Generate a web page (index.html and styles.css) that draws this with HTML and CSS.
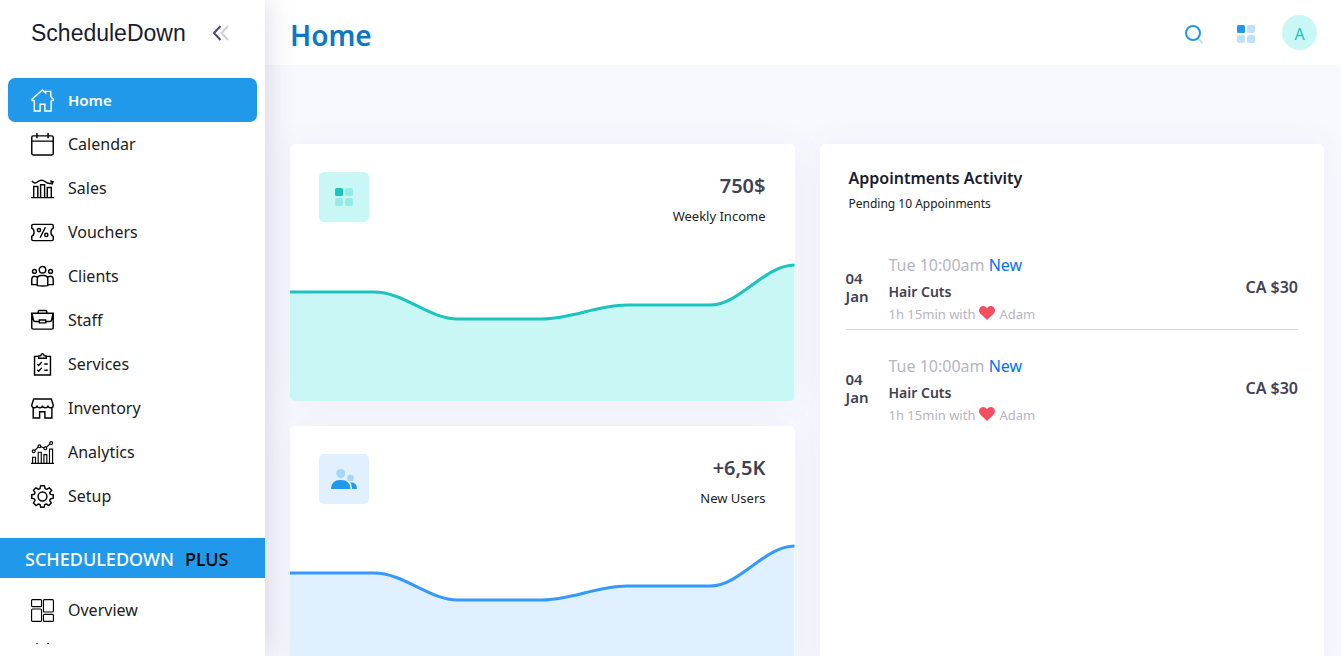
FILE: index.html
```html
<!DOCTYPE html>
<html lang="en">
<head>
<meta charset="utf-8">
<title>ScheduleDown</title>
<link rel="stylesheet" href="styles.css">
</head>
<body>
<div class="app">
  <aside class="sidebar">
    <div class="brand">
      <a class="brand-name" href="#">ScheduleDown</a>
      <button class="collapse" type="button" aria-label="Collapse menu">
        <svg width="18" height="18" viewBox="0 0 18 18" fill="none" stroke-width="2"><path d="M8.500 2 2 9l6.500 7" stroke="#494b7c"/><path d="M16 2 9.500 9l6.500 7" stroke="#cfcfde"/></svg>
      </button>
    </div>
    <nav class="menu">
      <ul class="menu-list">
        <li><a class="menu-item active" href="#"><svg class="icon" viewBox="0 0 24 24"><path d="M3.500 12v11h6v-7h5v7h6.500V12M3.500 12H1.200v-1.500L12 1l3.300 3V2.500h5.300V8l2.700 2.500V12H21"/></svg>Home</a></li>
        <li><a class="menu-item" href="#"><svg class="icon" viewBox="0 0 24 24"><rect x=".8" y="3" width="22.400" height="20" rx="1.500"/><path d="M1 8.500h22M6.200 0v5.500M17.800 0v5.500"/></svg>Calendar</a></li>
        <li><a class="menu-item" href="#"><svg class="icon" viewBox="0 0 24 24"><path d="M0 21.500h24M2.800 21V10h4.300v11M10 21V8h4.200v13M17 21V11h4.200v10M1 4.200c2 2.500 4 2.800 6 .8 3-2.600 5-2.600 8 0 2 1.800 4 2.500 7.500 1M20 4l3 1-1.500 3"/></svg>Sales</a></li>
        <li><a class="menu-item" href="#"><svg class="icon" viewBox="0 0 24 24"><path d="M2.200 3.500h19.600Q23.200 3.500 23.200 5v2.500C20 9 20 14.500 23.200 16v3q0 1.500-1.400 1.500H2.200Q.8 20.500.8 19v-3C4 14.500 4 9 .8 7.500V5q0-1.500 1.400-1.500ZM15 6.500 9.500 17.500"/><circle cx="8.300" cy="9.500" r="1.700"/><circle cx="16" cy="14.500" r="1.700"/></svg>Vouchers</a></li>
        <li><a class="menu-item" href="#"><svg class="icon" viewBox="0 0 24 24"><circle cx="12" cy="5" r="3.400"/><circle cx="3.600" cy="6.700" r="2"/><circle cx="20.400" cy="6.700" r="2"/><path d="M6.500 21.500V15q0-4 4-4h3q4 0 4 4v6.500q-5.500 1-11 0ZM6.500 20.500H.8v-5q0-3.700 3-3.700 2 0 3 1.500M17.500 20.500h5.700v-5q0-3.700-3-3.700-2 0-3 1.500"/></svg>Clients</a></li>
        <li><a class="menu-item" href="#"><svg class="icon" viewBox="0 0 24 24"><path d="M.8 4.500h22.400v15q0 1.500-1.500 1.500H2.300Q.8 21 .8 19.500ZM7.500 4V2.800q0-1.200 1.200-1.200h6.600q1.200 0 1.200 1.200V4M1 4.500l1.500 7q.3 1.500 2 1.500h4.200M23 4.500l-1.500 7q-.3 1.500-2 1.500h-4.200M8.700 11.500h6.600v3H8.700Z"/></svg>Staff</a></li>
        <li><a class="menu-item" href="#"><svg class="icon" viewBox="0 0 24 24"><path d="M8 3.500H3.700V23h16.600V3.500H16M8 5.500V3h2.200Q10.500.8 12 .8T13.800 3H16v2.500ZM6.500 11.500l1.500 1.500 3.300-3.500M6.500 17.500 8 19l3.300-3.500M13.800 11.500H17.500M13.800 18h3.700"/></svg>Services</a></li>
        <li><a class="menu-item" href="#"><svg class="icon" viewBox="0 0 24 24"><path d="M2.800 2h18.400l2 6.500q0 2.700-2.700 2.700t-2.800-2.400q0 2.400-2.900 2.400T12 8.800q0 2.400-2.800 2.400T6.300 8.800q0 2.400-2.800 2.400T.8 8.500ZM2.300 11.500V22H9v-6.700h5.500V22h7.300V11.500"/></svg>Inventory</a></li>
        <li><a class="menu-item" href="#"><svg class="icon thin" viewBox="0 0 24 24"><path d="M0 23.300h24M1.700 23v-6h3v6M7.500 23V11.700h3.200V23M13.500 23v-8.800h3V23M19.300 23V8.500h3.200V23M4 9.800l3.500-3.500M10 5.800l3.500 1.500M16 6.600l4-3.700"/><circle cx="2.800" cy="10.800" r="1.500"/><circle cx="8.800" cy="5.500" r="1.500"/><circle cx="14.900" cy="7.600" r="1.500"/><circle cx="21" cy="2.200" r="1.500"/></svg>Analytics</a></li>
        <li><a class="menu-item" href="#"><svg class="icon" viewBox="0 0 24 24"><circle cx="12" cy="12" r="4.600"/><path d="M10 .8h4l.7 2.900 1.800.8L19 2.900 21.600 5.500 19.500 8l.8 1.800 2.900.4v3.700l-2.900.6-.8 1.700 1.700 2.600-2.600 2.700-2.600-1.700-1.700.7-.6 2.700h-3.600l-.6-2.700-1.800-.7-2.500 1.700-2.700-2.700 1.700-2.600-.7-1.700-2.700-.6v-3.700l2.700-.6.7-1.800-1.700-2.400L5.200 2.900l2.500 1.600 1.700-.8Z" stroke-linejoin="round"/></svg>Setup</a></li>
      </ul>
      <h2 class="menu-heading">SCHEDULEDOWN <span class="plus">PLUS</span></h2>
      <ul class="menu-list">
        <li><a class="menu-item" href="#"><svg class="icon thin" viewBox="0 0 24 24"><rect x=".6" y=".6" width="10.400" height="7.400" rx="1"/><rect x=".6" y="10.400" width="10.400" height="13" rx="1"/><rect x="13" y=".6" width="10.400" height="13" rx="1"/><rect x="13" y="16" width="10.400" height="7.400" rx="1"/></svg>Overview</a></li>
        <li class="menu-item"><svg class="icon" viewBox="0 0 24 24"><rect x=".8" y="3" width="22.400" height="20" rx="1.500"/><path d="M1 8.500h22M6.200 0v5.500M17.800 0v5.500"/></svg></li>
      </ul>
    </nav>
  </aside>

  <div class="page">
    <header class="topbar">
      <h1 class="title">Home</h1>
      <div class="tools">
        <button class="tool" type="button" aria-label="Search"><svg width="20" height="20" viewBox="0 0 20 20" fill="none"><path d="m14 14.500 4.500 4.500" stroke="#bfe1fa" stroke-width="2.200"/><circle cx="9" cy="9" r="7" stroke="#2199ea" stroke-width="2"/></svg></button>
        <button class="tool" type="button" aria-label="Apps"><svg width="18" height="18" viewBox="0 0 18 18" fill="#bfe1fa"><rect width="8" height="8" rx="1.500" fill="#2199ea"/><rect x="10" width="8" height="8" rx="2"/><rect y="10" width="8" height="8" rx="2"/><rect x="10" y="10" width="8" height="8" rx="2"/></svg></button>
        <button class="avatar" type="button">A</button>
      </div>
    </header>

    <main class="content">
      <div class="column">
        <section class="card stat teal">
          <div class="stat-head">
            <span class="badge"><svg width="18" height="18" viewBox="0 0 18 18" fill="#98ebe5"><rect width="8" height="8" rx="1.500" fill="#1bc5bd"/><rect x="10" width="8" height="8" rx="2"/><rect y="10" width="8" height="8" rx="2"/><rect x="10" y="10" width="8" height="8" rx="2"/></svg></span>
            <div class="figures"><strong class="value">750$</strong><span class="label">Weekly Income</span></div>
          </div>
          <svg class="chart" viewBox="0 0 505 140" preserveAspectRatio="none">
            <path class="area" d="M0 31H84C114 31 139 58 168 58H252C282 58 307 44 337 44H421C450 44 475 4 505 4V140H0Z"/>
            <path class="line" d="M0 31H84C114 31 139 58 168 58H252C282 58 307 44 337 44H421C450 44 475 4 505 4"/>
          </svg>
        </section>
        <section class="card stat blue">
          <div class="stat-head">
            <span class="badge"><svg width="26" height="20" viewBox="0 0 26 20"><circle cx="9.700" cy="4.500" r="4.500" fill="#a6d6f7"/><circle cx="19.500" cy="9" r="3.300" fill="#a6d6f7"/><path d="M0 20q0-9 9.700-9t9.700 9Z" fill="#2199ea"/><path d="M19.400 13.200q6.600 0 6.600 6.800h-5q0-4-1.600-6.800Z" fill="#2199ea"/></svg></span>
            <div class="figures"><strong class="value">+6,5K</strong><span class="label">New Users</span></div>
          </div>
          <svg class="chart" viewBox="0 0 505 140" preserveAspectRatio="none">
            <path class="area" d="M0 30H84C114 30 139 57 168 57H252C282 57 307 43 337 43H421C450 43 475 3 505 3V140H0Z"/>
            <path class="line" d="M0 30H84C114 30 139 57 168 57H252C282 57 307 43 337 43H421C450 43 475 3 505 3"/>
          </svg>
        </section>
      </div>

      <section class="card activity">
        <h2 class="activity-title">Appointments Activity</h2>
        <p class="activity-sub">Pending 10 Appoinments</p>
        <ul class="appointments">
          <li class="appointment">
            <div class="date">04<br>Jan</div>
            <div class="details">
              <div class="when">Tue 10:00am <a class="new" href="#">New</a></div>
              <div class="service">Hair Cuts</div>
              <div class="staff">1h 15min with <svg class="heart" viewBox="0 0 16 14"><path d="M8 14 1.200 7.400C-.5 5.500-.3 2.700 1.300 1.200 3.200-.5 6.200-.4 8 2.200 9.800-.4 12.800-.5 14.700 1.200c1.600 1.500 1.800 4.300.1 6.200Z"/></svg> Adam</div>
            </div>
            <div class="price">CA $30</div>
          </li>
          <li class="appointment">
            <div class="date">04<br>Jan</div>
            <div class="details">
              <div class="when">Tue 10:00am <a class="new" href="#">New</a></div>
              <div class="service">Hair Cuts</div>
              <div class="staff">1h 15min with <svg class="heart" viewBox="0 0 16 14"><path d="M8 14 1.200 7.400C-.5 5.500-.3 2.700 1.300 1.200 3.200-.5 6.200-.4 8 2.200 9.800-.4 12.800-.5 14.700 1.200c1.600 1.500 1.800 4.300.1 6.200Z"/></svg> Adam</div>
            </div>
            <div class="price">CA $30</div>
          </li>
        </ul>
      </section>
    </main>
  </div>
</div>
</body>
</html>
```
FILE: styles.css
```css
* { box-sizing: border-box; }
body {
  margin: 0;
  font-family: "Noto Sans", "Open Sans", sans-serif;
  font-size: 14px;
  color: #212121;
  background: #f8f9ff;
}
h1, h2, p, ul { margin: 0; padding: 0; }
ul { list-style: none; }
a { color: inherit; text-decoration: none; }
button { border: 0; padding: 0; background: none; font: inherit; cursor: pointer; }
svg { display: block; }

.app { display: flex; height: 100vh; overflow: hidden; }

.sidebar {
  position: relative;
  z-index: 2;
  display: flex;
  flex-direction: column;
  flex: 0 0 265px;
  padding-bottom: 12px;
  background: #fff;
  box-shadow: 0 0 28px rgba(82, 63, 105, .22);
}
.brand {
  display: flex;
  align-items: center;
  justify-content: space-between;
  flex: 0 0 65px;
  padding: 0 35px 0 31px;
}
.brand-name {
  font: 23px/32px "Liberation Sans", Arial, sans-serif;
  color: #181c32;
}
.menu { flex: 1; min-height: 0; margin-top: 13px; overflow: hidden; }
.menu-list { padding: 0 8px; }
.menu-item {
  display: flex;
  align-items: center;
  gap: 14px;
  height: 44px;
  padding: 0 23px;
  border-radius: 7px;
  font-size: 16px;
  line-height: 24px;
}
.menu-item.active { background: #2199ea; color: #fff; font-size: 15px; font-weight: 600; }
.icon {
  flex: none;
  width: 23px;
  height: 23px;
  fill: none;
  stroke: #000;
  stroke-width: 1.5;
}
.icon.thin { stroke-width: 1.2; }
.active .icon { stroke: #fff; }
.menu-heading {
  display: flex;
  align-items: center;
  gap: 11px;
  height: 40px;
  margin: 20px 0 10px;
  padding: 2px 25px 0;
  background: #2199ea;
  color: #fff;
  font-size: 18px;
  font-weight: 500;
}
.plus { color: #000; }

.page { display: flex; flex: 1; flex-direction: column; min-width: 0; }
.topbar {
  display: flex;
  align-items: center;
  justify-content: space-between;
  flex: 0 0 65px;
  padding: 0 24px 0 25px;
  background: #fff;
}
.title { font-size: 28px; line-height: 40px; font-weight: 600; color: #0b77c5; padding-top: 4px; }
.tools { display: flex; align-items: center; gap: 20px; }
.tool { display: grid; place-items: center; width: 32px; height: 35px; padding-top: 2px; }
.avatar {
  width: 35px;
  height: 35px;
  padding-top: 2px;
  border-radius: 50%;
  background: #c9f7f5;
  color: #1bc5bd;
  font-size: 16px;
}

.content {
  display: grid;
  grid-template-columns: 1fr 1fr;
  gap: 25px;
  flex: 1;
  min-height: 0;
  padding: 79px 17px 0 25px;
  overflow: hidden;
}
.column { display: flex; flex-direction: column; gap: 25px; }
.card {
  background: #fff;
  border-radius: 5px;
  box-shadow: 0 0 35px rgba(82, 63, 105, .06);
}
.stat { overflow: hidden; flex: none; }
.stat-head {
  display: flex;
  justify-content: space-between;
  height: 117px;
  padding: 28px 29px 0;
}
.badge { display: grid; place-items: center; width: 50px; height: 50px; border-radius: 5px; }
.teal .badge { background: #c9f7f5; }
.blue .badge { background: #e1f0ff; }
.figures { display: flex; flex-direction: column; gap: 6px; text-align: right; }
.value { font-size: 20px; line-height: 28px; font-weight: 600; color: #3f4254; }
.label { font-size: 13px; line-height: 20px; }
.chart { width: 100%; height: 140px; }
.line { fill: none; stroke-width: 3; }
.teal .area { fill: #c9f7f5; }
.teal .line { stroke: #1bc5bd; }
.blue .area { fill: #e1f0ff; }
.blue .line { stroke: #3699ff; }

.activity { min-height: 530px; padding: 22px 26px 0; }
.activity-title { padding-left: 3px; font-size: 16px; line-height: 24px; font-weight: 600; color: #181c32; }
.activity-sub { padding-left: 3px; margin-top: 4px; font-size: 12px; line-height: 20px; }
.appointments { margin-top: 39px; }
.appointment {
  display: grid;
  grid-template-columns: 26px 1fr auto;
  align-items: center;
  column-gap: 17px;
  margin-bottom: 24px;
  padding-bottom: 4px;
  border-bottom: 1px solid #d9d9dd;
  color: #3f4254;
}
.appointment:last-child { border-bottom: 0; }
.date { padding-bottom: 5px; font-size: 15px; line-height: 18px; font-weight: 600; }
.when { font-size: 16px; line-height: 24px; color: #b5b5c3; }
.new { color: #0073ff; }
.service { margin-top: 4px; font-size: 14px; line-height: 22px; font-weight: 600; }
.staff { display: flex; align-items: center; gap: 4px; font-size: 13px; line-height: 22px; color: #b5b5c3; }
.heart { width: 16px; height: 14px; margin-bottom: 2px; fill: #f64e60; }
.price { padding-bottom: 5px; font-size: 16px; line-height: 20px; font-weight: 600; }
```
